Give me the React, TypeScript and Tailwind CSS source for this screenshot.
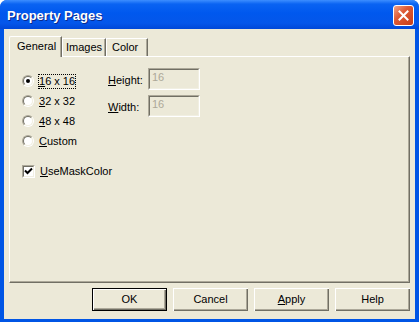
import type { ReactNode } from "react"

function Radio({ checked }: { checked?: boolean }) {
  return (
    <span className="w-[12px] h-[12px] rounded-full border border-[#ACA899] border-r-white border-b-white flex items-center justify-center shrink-0">
      <span className="w-[10px] h-[10px] rounded-full border border-[#716F64] border-r-[#F1EFE2] border-b-[#F1EFE2] bg-white flex items-center justify-center">
        {checked && <span className="w-[4px] h-[4px] rounded-full bg-black" />}
      </span>
    </span>
  )
}

function RadioRow({ checked, focus, children }: { checked?: boolean; focus?: boolean; children: ReactNode }) {
  return (
    <div className="h-[20px] flex items-center gap-[4px]">
      <Radio checked={checked} />
      <span className={`border leading-[13px] ${focus ? "border-dotted border-black" : "border-transparent"}`}>{children}</span>
    </div>
  )
}

function Field({ label, value }: { label: ReactNode; value: string }) {
  return (
    <div className="flex items-center h-[22px]">
      <span className="w-[40px] pt-[3px]">{label}</span>
      <div className="w-[52px] h-[22px] border border-[#ACA899] border-r-white border-b-white">
        <div className="w-full h-full border border-[#716F64] border-r-[#F1EFE2] border-b-[#F1EFE2] text-[#ACA899] pl-[2px] leading-[14px]">
          {value}
        </div>
      </div>
    </div>
  )
}

function Button({ children, isDefault }: { children: ReactNode; isDefault?: boolean }) {
  const face =
    "w-full h-full flex items-center justify-center bg-[#ECE9D8] shadow-[inset_1px_1px_0_#fff,inset_-1px_-1px_0_#716F64,inset_-2px_-2px_0_#ACA899]"
  return (
    <div className={`w-[75px] h-[23px] ${isDefault ? "border border-black" : ""}`}>
      <div className={face}>{children}</div>
    </div>
  )
}

export default function App() {
  return (
    <div className="w-[419px] h-[322px] bg-white font-['Liberation_Sans',Arial,sans-serif] text-[11px] text-black">
      <div className="w-full h-full flex flex-col rounded-t-[7px] bg-[#0055E5] overflow-hidden">
        {/* Title bar */}
        <div className="h-[29px] shrink-0 flex items-start justify-between bg-[linear-gradient(to_bottom,#3d8eff_0%,#0a63f2_14%,#0058ee_45%,#0456ea_80%,#0047d8_100%)]">
          <span className="pl-[7px] pt-[6px] text-[13px] font-bold text-white [text-shadow:1px_1px_0_#0a2a8c]">
            Property Pages
          </span>
          <div className="mt-[5px] mr-[5px] w-[21px] h-[21px] rounded-[3px] border border-white bg-[linear-gradient(135deg,#f0a488_0%,#dd5a36_40%,#c83d18_100%)] flex items-center justify-center">
            <svg width="11" height="11" viewBox="0 0 11 11">
              <path d="M1.5 1.5L9.5 9.5M9.5 1.5L1.5 9.5" stroke="white" strokeWidth="2" strokeLinecap="square" />
            </svg>
          </div>
        </div>

        {/* Client area */}
        <div className="flex-1 mx-[4px] mb-[3px] bg-[#ECE9D8] flex flex-col px-[5px] pt-[7px]">
          {/* Tabs */}
          <div className="h-[20px] flex items-end">
            <div className="relative z-10 -mb-px w-[53px] h-[21px] bg-[#ECE9D8] border-t border-l border-white border-r border-r-[#716F64] shadow-[inset_-1px_0_0_#ACA899] rounded-tl-[2px] flex items-center pl-[7px] pb-[1px]">
              General
            </div>
            <div className="w-[44px] h-[18px] border-t border-l border-white border-r border-r-[#716F64] shadow-[inset_-1px_0_0_#ACA899] flex items-center pl-[3px]">
              Images
            </div>
            <div className="w-[42px] h-[18px] border-t border-l border-white border-r border-r-[#716F64] shadow-[inset_-1px_0_0_#ACA899] flex items-center pl-[5px]">
              Color
            </div>
          </div>

          {/* Panel */}
          <div className="h-[227px] border-t border-l border-white border-r border-b border-r-[#716F64] border-b-[#716F64] shadow-[inset_-1px_-1px_0_#ACA899] flex items-start pl-[12px]">
            <div className="w-[86px] pt-[14px]">
              <RadioRow checked focus>
                <u>1</u>6 x 16
              </RadioRow>
              <RadioRow>
                <u>3</u>2 x 32
              </RadioRow>
              <RadioRow>
                <u>4</u>8 x 48
              </RadioRow>
              <RadioRow>
                <u>C</u>ustom
              </RadioRow>
              <div className="mt-[10px] h-[20px] flex items-center gap-[5px]">
                <span className="w-[13px] h-[13px] border border-[#ACA899] border-r-white border-b-white shrink-0">
                  <span className="block w-full h-full border border-[#716F64] border-r-[#F1EFE2] border-b-[#F1EFE2] bg-white">
                    <svg width="9" height="9" viewBox="0 0 9 9" className="block">
                      <path d="M1 3.5L3.5 6L8 1.5" stroke="black" strokeWidth="2" fill="none" />
                    </svg>
                  </span>
                </span>
                <span className="whitespace-nowrap">
                  <u>U</u>seMaskColor
                </span>
              </div>
            </div>
            <div className="pt-[11px] flex flex-col gap-[5px]">
              <Field
                label={
                  <>
                    <u>H</u>eight:
                  </>
                }
                value="16"
              />
              <Field
                label={
                  <>
                    <u>W</u>idth:
                  </>
                }
                value="16"
              />
            </div>
          </div>

          {/* Buttons */}
          <div className="mt-[5px] flex justify-end gap-[6px]">
            <Button isDefault>OK</Button>
            <Button>Cancel</Button>
            <Button>
              <span>
                <u>A</u>pply
              </span>
            </Button>
            <Button>Help</Button>
          </div>
        </div>
      </div>
    </div>
  )
}
